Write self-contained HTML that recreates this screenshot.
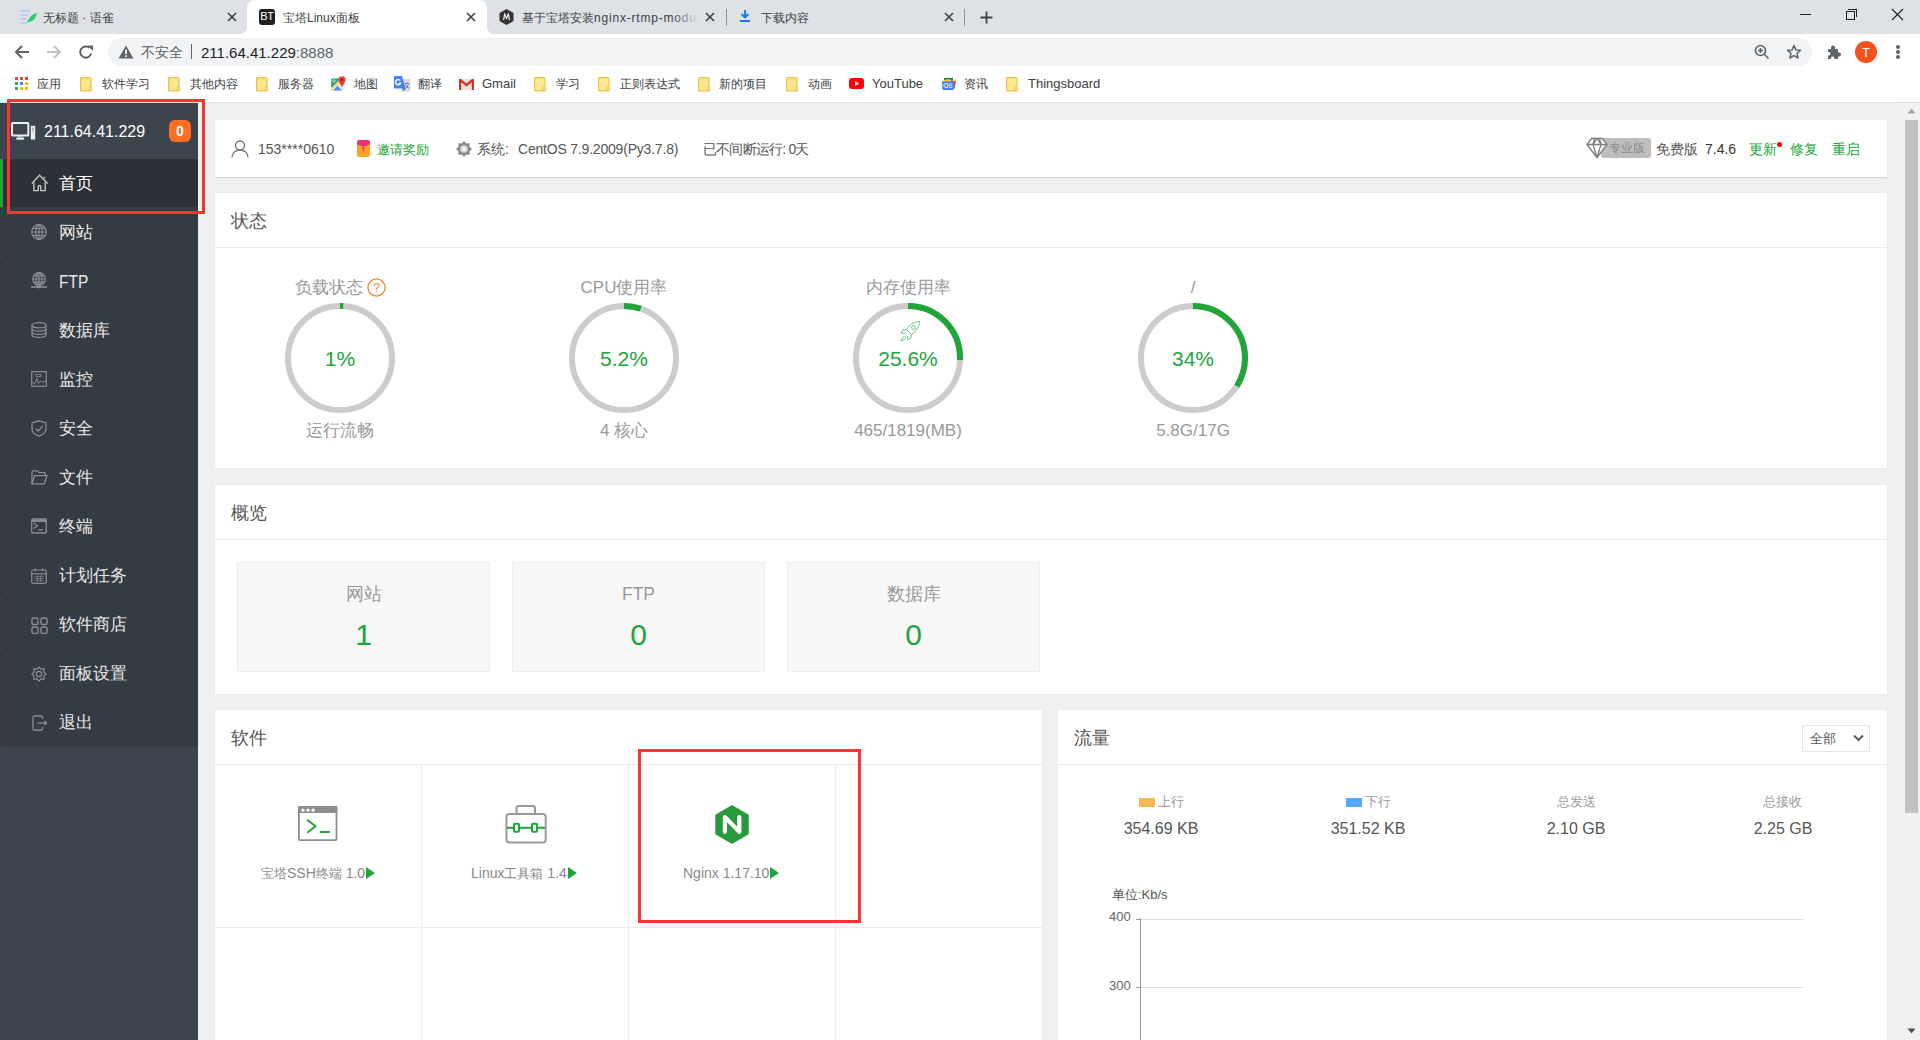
<!DOCTYPE html>
<html><head><meta charset="utf-8">
<style>
*{box-sizing:border-box;margin:0;padding:0}
html,body{width:1920px;height:1040px;overflow:hidden;background:#f0f0f0;font-family:"Liberation Sans",sans-serif;position:relative}
.a{position:absolute}
.t{position:absolute;white-space:nowrap;line-height:1}
/* chrome */
#tabstrip{left:0;top:0;width:1920px;height:34px;background:#dee1e6}
#acttab{left:247px;top:0;width:240px;height:35px;background:#fff;border-radius:8px 8px 0 0}
#toolbar{left:0;top:34px;width:1920px;height:35px;background:#fff}
#omni{left:108px;top:38px;width:1704px;height:28px;background:#f1f3f4;border-radius:14px}
#bmbar{left:0;top:69px;width:1920px;height:33px;background:#fff}
#bmline{left:0;top:102px;width:1920px;height:1px;background:#dadce0}
.tabtxt{font-size:12px;color:#3c4043}
.bm{font-size:12px;color:#3c4043}
.folder{position:absolute;width:12px;height:13px;background:#fde293;border:1px solid #f1c54a;border-radius:1px}
/* page */
#sidebar{left:0;top:103px;width:198px;height:937px;background:#3c444d}
#menu{left:0;top:159px;width:198px;height:588px;background:#353b42}
#cur{left:0;top:159px;width:198px;height:48px;background:#2c3138}
#curbar{left:0;top:159px;width:3px;height:48px;background:#20a53a}
.mi{font-size:17.3px;color:#e8e8e8}
.card{position:absolute;background:#fff;box-shadow:0 0 1px rgba(0,0,0,.12)}
.hdl{position:absolute;height:1px;background:#ebebeb}
.ttl{font-size:18px;color:#555}
#sbtrack{left:1903px;top:103px;width:17px;height:937px;background:#f1f1f1}
#sbthumb{left:1905px;top:120px;width:13px;height:693px;background:#c1c1c1}
.redbox{position:absolute;border:3px solid #fb3333}
.green{color:#20a53a}
.st{font-size:17px;color:#999}
.pct{font-size:21px;color:#20a53a}
.ovb{position:absolute;top:562px;width:253px;height:110px;background:#f8f8f8;border:1px solid #eee}
.ovl{top:586px;text-align:center;font-size:17.5px;color:#999}
.ovn{top:620px;text-align:center;font-size:30px;color:#20a53a}
.sw{font-size:14px;color:#888}
.cj{font-size:13px}
.tri{display:inline-block;width:0;height:0;border-left:9px solid #20a53a;border-top:6px solid transparent;border-bottom:6px solid transparent;margin-left:1px;vertical-align:-1px}
.lg{font-size:13px;color:#999}
.tv{top:821px;text-align:center;font-size:16px;color:#555}
.ax{font-size:13px;color:#666}
</style></head>
<body>
<!-- ============ CHROME ============ -->
<div id="tabstrip" class="a"></div>
<div id="acttab" class="a"></div>
<div id="toolbar" class="a"></div>
<div id="omni" class="a"></div>
<div id="bmbar" class="a"></div>
<div id="bmline" class="a"></div>
<!-- tabs -->
<svg class="a" style="left:20px;top:9px" width="18" height="17" viewBox="0 0 18 17"><g stroke="#a9cdef" stroke-width="1.6"><line x1="1" y1="2" x2="10" y2="2"/><line x1="1" y1="6" x2="8" y2="6"/><line x1="1" y1="10" x2="6" y2="10"/><line x1="1" y1="14" x2="5" y2="14"/></g><path d="M6 16 C8 9 12 5 17 4 C16 10 12 13 8 13 Z" fill="#2ecc71"/></svg>
<div class="t tabtxt" style="left:43px;top:12px">无标题 · 语雀</div>
<svg class="a" style="left:227px;top:12px" width="10" height="10" viewBox="0 0 10 10"><path d="M1 1L9 9M9 1L1 9" stroke="#3c4043" stroke-width="1.6"/></svg>
<!-- active tab flares -->
<div class="a" style="left:239px;top:26px;width:8px;height:8px;background:radial-gradient(circle at 0 0,#dee1e6 8px,#fff 8.5px)"></div>
<div class="a" style="left:487px;top:26px;width:8px;height:8px;background:radial-gradient(circle at 100% 0,#dee1e6 8px,#fff 8.5px)"></div>
<div class="a" style="left:259px;top:9px;width:16px;height:16px;background:#1f1f1f;border-radius:3px"></div>
<div class="t" style="left:260px;top:11px;width:14px;text-align:center;font-size:11px;color:#fff;letter-spacing:-0.3px">BT</div>
<div class="t tabtxt" style="left:283px;top:12px">宝塔Linux面板</div>
<svg class="a" style="left:466px;top:12px" width="10" height="10" viewBox="0 0 10 10"><path d="M1 1L9 9M9 1L1 9" stroke="#3c4043" stroke-width="1.6"/></svg>
<svg class="a" style="left:499px;top:9px" width="15" height="16" viewBox="0 0 15 16"><path d="M7.5 0L14.5 4V12L7.5 16L0.5 12V4Z" fill="#333"/><path d="M4.6 11.2L5.6 4.8L7.5 9.6L9.4 4.8L10.4 11.2" stroke="#fff" stroke-width="1.1" fill="none" stroke-linejoin="round"/></svg>
<div class="a" style="left:522px;top:9px;width:178px;height:17px;overflow:hidden"><div class="t tabtxt" style="left:0;top:3px">基于宝塔安装<span style="letter-spacing:.8px">nginx-rtmp-module</span></div></div>
<div class="a" style="left:672px;top:9px;width:28px;height:17px;background:linear-gradient(90deg,rgba(222,225,230,0),#dee1e6)"></div>
<svg class="a" style="left:705px;top:12px" width="10" height="10" viewBox="0 0 10 10"><path d="M1 1L9 9M9 1L1 9" stroke="#3c4043" stroke-width="1.6"/></svg>
<div class="a" style="left:726px;top:9px;width:1px;height:17px;background:#8f9296"></div>
<svg class="a" style="left:739px;top:9px" width="12" height="14" viewBox="0 0 12 14"><path d="M6 1V8M2.5 5L6 8.5L9.5 5" stroke="#1a73e8" stroke-width="1.8" fill="none"/><rect x="1" y="11" width="10" height="2" fill="#1a73e8"/></svg>
<div class="t tabtxt" style="left:761px;top:12px">下载内容</div>
<svg class="a" style="left:944px;top:12px" width="10" height="10" viewBox="0 0 10 10"><path d="M1 1L9 9M9 1L1 9" stroke="#3c4043" stroke-width="1.6"/></svg>
<div class="a" style="left:964px;top:9px;width:1px;height:17px;background:#8f9296"></div>
<svg class="a" style="left:980px;top:11px" width="13" height="13" viewBox="0 0 13 13"><path d="M6.5 0.5V12.5M0.5 6.5H12.5" stroke="#3c4043" stroke-width="1.8"/></svg>
<!-- window controls -->
<div class="a" style="left:1800px;top:14px;width:11px;height:1px;background:#202124"></div>
<div class="a" style="left:1848px;top:9px;width:9px;height:8px;border:1px solid #202124;border-bottom:none;border-left:none"></div>
<div class="a" style="left:1846px;top:11px;width:9px;height:9px;border:1px solid #202124;background:#dee1e6"></div>
<svg class="a" style="left:1891px;top:8px" width="13" height="13" viewBox="0 0 13 13"><path d="M1 1L12 12M12 1L1 12" stroke="#202124" stroke-width="1.1"/></svg>
<!-- toolbar -->
<svg class="a" style="left:14px;top:44px" width="16" height="16" viewBox="0 0 16 16"><path d="M15 8H2.5M8 2L2 8L8 14" stroke="#5f6368" stroke-width="2" fill="none"/></svg>
<svg class="a" style="left:46px;top:44px" width="16" height="16" viewBox="0 0 16 16"><path d="M1 8H13.5M8 2L14 8L8 14" stroke="#bdc1c6" stroke-width="2" fill="none"/></svg>
<svg class="a" style="left:78px;top:44px" width="16" height="16" viewBox="0 0 16 16"><path d="M13.2 9.5A5.6 5.6 0 1 1 11.5 3.8" stroke="#5f6368" stroke-width="2" fill="none"/><path d="M9.5 1.5H15V7Z" fill="#5f6368"/></svg>
<svg class="a" style="left:118px;top:45px" width="16" height="14" viewBox="0 0 16 14"><path d="M8 0.5L15.5 13.5H0.5Z" fill="#5f6368"/><rect x="7.1" y="4.5" width="1.8" height="4.5" fill="#f1f3f4"/><rect x="7.1" y="10.2" width="1.8" height="1.8" fill="#f1f3f4"/></svg>
<div class="t" style="left:141px;top:45px;font-size:14px;color:#5f6368">不安全</div>
<div class="a" style="left:191px;top:44px;width:1px;height:15px;background:#5f6368"></div>
<div class="t" style="left:201px;top:45px;font-size:15px;color:#202124">211.64.41.229<span style="color:#5f6368">:8888</span></div>
<svg class="a" style="left:1754px;top:44px" width="16" height="16" viewBox="0 0 16 16"><circle cx="6.5" cy="6.5" r="5" stroke="#5f6368" stroke-width="1.6" fill="none"/><path d="M10.2 10.2L14.5 14.5M6.5 4V9M4 6.5H9" stroke="#5f6368" stroke-width="1.6"/></svg>
<svg class="a" style="left:1786px;top:44px" width="16" height="16" viewBox="0 0 16 16"><path d="M8 1.5L9.9 5.9L14.6 6.3L11 9.4L12.1 14L8 11.6L3.9 14L5 9.4L1.4 6.3L6.1 5.9Z" stroke="#5f6368" stroke-width="1.5" fill="none" stroke-linejoin="round"/></svg>
<svg class="a" style="left:1826px;top:44px" width="16" height="16" viewBox="0 0 16 16"><path d="M2 5H5V3.5A2 2 0 0 1 9 3.5V5H12V8.5H13A2 2 0 0 1 13 12.5H12V15H8.5V14A1.8 1.8 0 0 0 5 14V15H2V11.5H3A1.8 1.8 0 0 0 3 8H2Z" fill="#5f6368"/></svg>
<div class="a" style="left:1855px;top:41px;width:22px;height:22px;border-radius:50%;background:#f4511e"></div>
<div class="t" style="left:1855px;top:46px;width:22px;text-align:center;font-size:13px;color:#fff">T</div>
<div class="a" style="left:1896px;top:45px;width:4px;height:4px;border-radius:50%;background:#5f6368"></div>
<div class="a" style="left:1896px;top:50px;width:4px;height:4px;border-radius:50%;background:#5f6368"></div>
<div class="a" style="left:1896px;top:55px;width:4px;height:4px;border-radius:50%;background:#5f6368"></div>
<!-- bookmarks -->
<svg class="a" style="left:15px;top:77px" width="14" height="14" viewBox="0 0 14 14"><rect x="0" y="0" width="3" height="3" fill="#ea4335"/><rect x="5" y="0" width="3" height="3" fill="#ea4335"/><rect x="10" y="0" width="3" height="3" fill="#ea4335"/><rect x="0" y="5" width="3" height="3" fill="#34a853"/><rect x="5" y="5" width="3" height="3" fill="#4285f4"/><rect x="10" y="5" width="3" height="3" fill="#fbbc04"/><rect x="0" y="10" width="3" height="3" fill="#34a853"/><rect x="5" y="10" width="3" height="3" fill="#fbbc04"/><rect x="10" y="10" width="3" height="3" fill="#fbbc04"/></svg>
<div class="t bm" style="left:37px;top:78px">应用</div>
<svg class="a" style="left:80px;top:77px" width="13" height="15" viewBox="0 0 13 15"><rect x="0.6" y="0.6" width="10.3" height="13.2" rx="0.6" fill="#fde68f" stroke="#e8c547" stroke-width="1.2"/><rect x="9.3" y="9.3" width="2.5" height="4.5" rx="1.2" fill="#fde68f" stroke="#e8c547" stroke-width="1"/></svg>
<div class="t bm" style="left:102px;top:78px">软件学习</div>
<svg class="a" style="left:168px;top:77px" width="13" height="15" viewBox="0 0 13 15"><rect x="0.6" y="0.6" width="10.3" height="13.2" rx="0.6" fill="#fde68f" stroke="#e8c547" stroke-width="1.2"/><rect x="9.3" y="9.3" width="2.5" height="4.5" rx="1.2" fill="#fde68f" stroke="#e8c547" stroke-width="1"/></svg>
<div class="t bm" style="left:190px;top:78px">其他内容</div>
<svg class="a" style="left:256px;top:77px" width="13" height="15" viewBox="0 0 13 15"><rect x="0.6" y="0.6" width="10.3" height="13.2" rx="0.6" fill="#fde68f" stroke="#e8c547" stroke-width="1.2"/><rect x="9.3" y="9.3" width="2.5" height="4.5" rx="1.2" fill="#fde68f" stroke="#e8c547" stroke-width="1"/></svg>
<div class="t bm" style="left:278px;top:78px">服务器</div>
<svg class="a" style="left:331px;top:76px" width="16" height="15" viewBox="0 0 16 15"><rect x="0.3" y="2.5" width="12.5" height="12" rx="0.8" fill="#e8eaed"/><path d="M0.3 3.3A0.8 0.8 0 0 1 1.1 2.5H9.5L0.3 12Z" fill="#1ea362"/><path d="M2 14.5L6.5 9.8L11 14.5Z" fill="#4a89f3"/><path d="M0.5 13.8L9.8 3.5" stroke="#ffd04b" stroke-width="1.4"/><path d="M11 0.3A3.6 3.6 0 0 1 14.6 3.9C14.6 6.5 11.8 8.5 11 11.3C10.2 8.5 7.4 6.5 7.4 3.9A3.6 3.6 0 0 1 11 0.3Z" fill="#e94235"/><circle cx="11" cy="3.9" r="1.1" fill="#7a1a12"/><circle cx="3" cy="5" r="1.3" fill="none" stroke="#c8f0d8" stroke-width=".8"/></svg>
<div class="t bm" style="left:354px;top:78px">地图</div>
<svg class="a" style="left:394px;top:76px" width="17" height="16" viewBox="0 0 17 16"><rect x="7.5" y="3" width="9" height="12.7" fill="#dadce0"/><path d="M1 0H9.8L14.2 15.3H1A1 1 0 0 1 0 14.3V1A1 1 0 0 1 1 0Z" fill="#4285f4" transform="scale(0.82 0.82)"/><path d="M8.3 12.5L11.5 12.5L9.5 15Z" fill="#3b4bb0"/><path d="M6.2 4.5A2.6 2.6 0 1 0 6.6 7.2H4.6" stroke="#fff" stroke-width="1.3" fill="none"/><path d="M11 7.5H15M13 6.5V7.5M11.8 8.5C12.3 10.5 13.5 11.8 15 12.3M14.2 8.5C13.7 10.5 12.5 11.8 11 12.3" stroke="#5f6368" stroke-width=".8" fill="none"/></svg>
<div class="t bm" style="left:418px;top:78px">翻译</div>
<svg class="a" style="left:459px;top:78px" width="15" height="13" viewBox="0 0 15 13"><rect x="1.5" y="1" width="12" height="11" fill="#e6e6e6"/><path d="M0 1V12H2.2V4.3L7.5 8.6L12.8 4.3V12H15V1H13L7.5 5.6L2 1Z" fill="#d93025"/></svg>
<div class="t" style="left:482px;top:77px;font-size:13px;color:#3c4043">Gmail</div>
<svg class="a" style="left:534px;top:77px" width="13" height="15" viewBox="0 0 13 15"><rect x="0.6" y="0.6" width="10.3" height="13.2" rx="0.6" fill="#fde68f" stroke="#e8c547" stroke-width="1.2"/><rect x="9.3" y="9.3" width="2.5" height="4.5" rx="1.2" fill="#fde68f" stroke="#e8c547" stroke-width="1"/></svg>
<div class="t bm" style="left:556px;top:78px">学习</div>
<svg class="a" style="left:598px;top:77px" width="13" height="15" viewBox="0 0 13 15"><rect x="0.6" y="0.6" width="10.3" height="13.2" rx="0.6" fill="#fde68f" stroke="#e8c547" stroke-width="1.2"/><rect x="9.3" y="9.3" width="2.5" height="4.5" rx="1.2" fill="#fde68f" stroke="#e8c547" stroke-width="1"/></svg>
<div class="t bm" style="left:620px;top:78px">正则表达式</div>
<svg class="a" style="left:698px;top:77px" width="13" height="15" viewBox="0 0 13 15"><rect x="0.6" y="0.6" width="10.3" height="13.2" rx="0.6" fill="#fde68f" stroke="#e8c547" stroke-width="1.2"/><rect x="9.3" y="9.3" width="2.5" height="4.5" rx="1.2" fill="#fde68f" stroke="#e8c547" stroke-width="1"/></svg>
<div class="t bm" style="left:719px;top:78px">新的项目</div>
<svg class="a" style="left:786px;top:77px" width="13" height="15" viewBox="0 0 13 15"><rect x="0.6" y="0.6" width="10.3" height="13.2" rx="0.6" fill="#fde68f" stroke="#e8c547" stroke-width="1.2"/><rect x="9.3" y="9.3" width="2.5" height="4.5" rx="1.2" fill="#fde68f" stroke="#e8c547" stroke-width="1"/></svg>
<div class="t bm" style="left:808px;top:78px">动画</div>
<svg class="a" style="left:849px;top:78px" width="15" height="11" viewBox="0 0 15 11"><rect x="0" y="0" width="15" height="11" rx="3" fill="#ff0000"/><path d="M6 3V8L10 5.5Z" fill="#fff"/></svg>
<div class="t" style="left:872px;top:77px;font-size:13px;color:#3c4043">YouTube</div>
<svg class="a" style="left:940px;top:77px" width="17" height="14" viewBox="0 0 17 14"><rect x="4" y="0.8" width="9" height="3" fill="#0f9d58"/><path d="M1.3 4.5L5 3L8.5 2.3L13.5 3.5L16 4.5L14.5 12H2.5Z" fill="#ffcd40"/><path d="M11 3L16 4.5L14.5 11H12Z" fill="#ea4335"/><rect x="2.3" y="4.2" width="11.6" height="8.8" rx=".8" fill="#4285f4"/><circle cx="6" cy="8.5" r="2" fill="none" stroke="#d6e4fd" stroke-width="1.2"/><path d="M9 6.8H12.3M9 8.6H12.3M9 10.4H12.3" stroke="#d6e4fd" stroke-width="1"/></svg>
<div class="t bm" style="left:964px;top:78px">资讯</div>
<svg class="a" style="left:1006px;top:77px" width="13" height="15" viewBox="0 0 13 15"><rect x="0.6" y="0.6" width="10.3" height="13.2" rx="0.6" fill="#fde68f" stroke="#e8c547" stroke-width="1.2"/><rect x="9.3" y="9.3" width="2.5" height="4.5" rx="1.2" fill="#fde68f" stroke="#e8c547" stroke-width="1"/></svg>
<div class="t" style="left:1028px;top:77px;font-size:13px;color:#3c4043">Thingsboard</div>

<!-- ============ PAGE ============ -->
<div id="sidebar" class="a"></div>
<div id="menu" class="a"></div>
<div id="cur" class="a"></div>
<div id="curbar" class="a"></div>
<!-- sidebar content -->
<div class="a" style="left:0;top:207px;width:2px;height:540px;background:repeating-linear-gradient(180deg,#4a4a4a 0,#4a4a4a 1px,#3a3a3a 1px,#3a3a3a 49px)"></div>
<svg class="a" style="left:11px;top:122px" width="25" height="19" viewBox="0 0 25 19"><rect x="1" y="1" width="16.3" height="12.5" rx=".5" stroke="#f0f0f0" stroke-width="2" fill="none"/><rect x="7" y="14" width="4.5" height="1.5" fill="#b8bbbe"/><rect x="5.2" y="15.6" width="8" height="2.2" rx="1" fill="#e8e8e8"/><rect x="19.8" y="3.8" width="4.4" height="13.8" rx=".6" fill="#f0f0f0"/><rect x="21.2" y="5.5" width="1.6" height="3" fill="#9ea1a5"/><rect x="21.2" y="9.5" width="1.6" height="1.5" fill="#c5c7ca"/></svg>
<div class="t" style="left:44px;top:124px;font-size:16px;color:#fff">211.64.41.229</div>
<div class="a" style="left:169px;top:120px;width:22px;height:22px;border-radius:6px;background:#fd6e23"></div>
<div class="t" style="left:169px;top:124px;width:22px;text-align:center;font-size:14px;font-weight:bold;color:#fff">0</div>

<svg class="a" style="left:31px;top:174px" width="18" height="18" viewBox="0 0 18 18" fill="none" stroke="#c4c6c9" stroke-width="1.4"><path d="M0.8 9.6L8.5 1.3L16.6 9.6"/><path d="M2.9 8.2V16.6H7.2V12.8A1.3 1.3 0 0 1 9.8 12.8V16.6H14.2V8.2"/><circle cx="13.4" cy="3.7" r="1.3" fill="#8b8e92" stroke="none"/></svg>
<div class="t mi" style="left:59px;top:175px;color:#fff">首页</div>

<svg class="a" style="left:31px;top:224px" width="16" height="16" viewBox="0 0 16 16" fill="none" stroke="#8a8e93" stroke-width="1.2"><circle cx="8" cy="8" r="7.3"/><ellipse cx="8" cy="8" rx="3.3" ry="7.3"/><path d="M8 0.7V15.3M0.7 8H15.3M2 4.3H14M2 11.7H14"/></svg>
<div class="t mi" style="left:59px;top:224px">网站</div>

<svg class="a" style="left:30px;top:272px" width="18" height="17" viewBox="0 0 18 17" fill="none" stroke="#8a8e93" stroke-width="1.2"><circle cx="9" cy="7" r="6.3"/><ellipse cx="9" cy="7" rx="2.8" ry="6.3"/><path d="M9 0.7V13.3M2.7 7H15.3M3.8 3.8H14.2M3.8 10.2H14.2"/><path d="M1 15H17" stroke-width="1.6"/><rect x="7.3" y="13.8" width="3.4" height="2.4" fill="#8a8e93" stroke="none"/></svg>
<div class="t mi" style="left:59px;top:273px;font-size:18px;transform:scaleX(.86);transform-origin:0 0">FTP</div>

<svg class="a" style="left:31px;top:322px" width="16" height="16" viewBox="0 0 16 16" fill="none" stroke="#8a8e93" stroke-width="1.2"><ellipse cx="8" cy="3.3" rx="7" ry="2.6"/><path d="M1 3.3V12.7C1 14.2 4.1 15.3 8 15.3C11.9 15.3 15 14.2 15 12.7V3.3"/><path d="M1 6.5C1 8 4.1 9.1 8 9.1C11.9 9.1 15 8 15 6.5M1 9.7C1 11.2 4.1 12.3 8 12.3C11.9 12.3 15 11.2 15 9.7"/></svg>
<div class="t mi" style="left:59px;top:322px">数据库</div>

<svg class="a" style="left:31px;top:371px" width="16" height="16" viewBox="0 0 16 16" fill="none" stroke="#8a8e93" stroke-width="1.2"><rect x="0.7" y="0.7" width="14.6" height="14.6"/><rect x="5" y="3.5" width="5" height="2" stroke-width=".8"/><path d="M1 11L3.5 13L6 7.5L7.5 12.5L9.5 10L12 11.5L15 9.5" stroke-width="1"/></svg>
<div class="t mi" style="left:59px;top:371px">监控</div>

<svg class="a" style="left:31px;top:420px" width="16" height="17" viewBox="0 0 16 17" fill="none" stroke="#8a8e93" stroke-width="1.3"><path d="M8 0.8L15 3V8.5C15 12 12 14.8 8 16.2C4 14.8 1 12 1 8.5V3Z"/><path d="M4.5 8.5L7.2 11L11.8 6"/></svg>
<div class="t mi" style="left:59px;top:420px">安全</div>

<svg class="a" style="left:31px;top:470px" width="17" height="15" viewBox="0 0 17 15" fill="none" stroke="#8a8e93" stroke-width="1.3"><path d="M1 13.8V2A1.3 1.3 0 0 1 2.3 0.8H6.5L8 2.7H13.3A1 1 0 0 1 14.3 3.7V5.7"/><path d="M1 13.8L3.5 5.7H16L13.3 13.8Z"/></svg>
<div class="t mi" style="left:59px;top:469px">文件</div>

<svg class="a" style="left:31px;top:518px" width="16" height="16" viewBox="0 0 16 16" fill="none" stroke="#8a8e93" stroke-width="1.3"><rect x="0.7" y="1" width="14.6" height="14" rx="1"/><path d="M1 2.8H15" stroke-width="2.4"/><path d="M2.5 5.3L6.5 7.8L2.5 10.5"/><path d="M7.5 11.8H12"/></svg>
<div class="t mi" style="left:59px;top:518px">终端</div>

<svg class="a" style="left:31px;top:568px" width="16" height="16" viewBox="0 0 16 16" fill="none" stroke="#8a8e93" stroke-width="1.2"><rect x="0.7" y="2" width="14.6" height="13.3" rx="1.5"/><path d="M0.7 5.7H15.3"/><path d="M4.3 0.5V3M11.7 0.5V3" stroke-width="1.5"/><path d="M3.5 8.3H12.5M3.5 10.5H12.5M3.5 12.7H12.5M6.3 7.5V14M9.7 7.5V14" stroke-width=".7"/></svg>
<div class="t mi" style="left:59px;top:567px">计划任务</div>

<svg class="a" style="left:31px;top:617px" width="17" height="17" viewBox="0 0 17 17" fill="none" stroke="#8a8e93" stroke-width="1.4"><rect x="1" y="1" width="6" height="6.5" rx="1.6"/><rect x="10" y="1" width="6" height="6.5" rx="1.6"/><rect x="1" y="10" width="6" height="6.5" rx="1.6"/><rect x="10" y="10" width="6" height="6.5" rx="1.6"/></svg>
<div class="t mi" style="left:59px;top:616px">软件商店</div>

<svg class="a" style="left:31px;top:666px" width="16" height="16" viewBox="0 0 16 16" fill="none" stroke="#8a8e93" stroke-width="1.2"><path d="M8 0.8L10 3.2L13.1 2.9L12.8 6L15.2 8L12.8 10L13.1 13.1L10 12.8L8 15.2L6 12.8L2.9 13.1L3.2 10L0.8 8L3.2 6L2.9 2.9L6 3.2Z"/><circle cx="8" cy="8" r="2.7"/></svg>
<div class="t mi" style="left:59px;top:665px">面板设置</div>

<svg class="a" style="left:32px;top:715px" width="16" height="16" viewBox="0 0 16 16" fill="none" stroke="#8a8e93" stroke-width="1.3"><path d="M10.5 4V2.2A1.2 1.2 0 0 0 9.3 1H2.3A1.2 1.2 0 0 0 1 2.2V13.8A1.2 1.2 0 0 0 2.3 15H9.3A1.2 1.2 0 0 0 10.5 13.8V12"/><path d="M5.5 8H13.5"/><path d="M12.5 6L14.5 8L12.5 10" fill="#8a8e93"/></svg>
<div class="t mi" style="left:59px;top:714px">退出</div>

<div id="sbtrack" class="a"></div>
<div id="sbthumb" class="a"></div>

<div class="card" style="left:215px;top:120px;width:1672px;height:57px;box-shadow:0 1px 1px rgba(0,0,0,.09),0 0 1px rgba(0,0,0,.08)"></div>
<div class="card" style="left:215px;top:193px;width:1672px;height:275px"></div>
<div class="hdl" style="left:215px;top:247px;width:1672px"></div>
<div class="card" style="left:215px;top:485px;width:1672px;height:209px"></div>
<div class="hdl" style="left:215px;top:539px;width:1672px"></div>
<div class="card" style="left:215px;top:710px;width:827px;height:330px"></div>
<div class="hdl" style="left:215px;top:764px;width:827px"></div>
<div class="card" style="left:1058px;top:710px;width:829px;height:330px"></div>
<div class="hdl" style="left:1058px;top:764px;width:829px"></div>

<!--CONTENT-->
<!-- card1 user info -->
<svg class="a" style="left:231px;top:140px" width="18" height="18" viewBox="0 0 18 18" fill="none" stroke="#777" stroke-width="1.4"><circle cx="9" cy="5.5" r="4.5"/><path d="M1 17.5C1 12.8 4.6 10 9 10C13.4 10 17 12.8 17 17.5"/></svg>
<div class="t" style="left:258px;top:142px;font-size:14px;color:#555">153****0610</div>
<svg class="a" style="left:357px;top:140px" width="13" height="17" viewBox="0 0 13 17"><rect x="0" y="0" width="13" height="17" rx="2.5" fill="#f6a623"/><path d="M0 2.5A2.5 2.5 0 0 1 2.5 0H10.5A2.5 2.5 0 0 1 13 2.5V4.2Q6.5 8.2 0 4.2Z" fill="#e8336e"/><path d="M5.2 6.6H7.8L6.5 12.5Z" fill="#e8336e"/></svg>
<div class="t green" style="left:377px;top:143px;font-size:13px">邀请奖励</div>
<svg class="a" style="left:456px;top:141px" width="16" height="16" viewBox="0 0 15.2 15.2"><path d="M7.60 0.00 L9.74 2.43 L12.97 2.23 L12.77 5.46 L15.20 7.60 L12.77 9.74 L12.97 12.97 L9.74 12.77 L7.60 15.20 L5.46 12.77 L2.23 12.97 L2.43 9.74 L0.00 7.60 L2.43 5.46 L2.23 2.23 L5.46 2.43Z" fill="#888"/><circle cx="7.6" cy="7.6" r="3.6" fill="#d8d8d8"/><circle cx="7.6" cy="7.6" r="1.8" fill="#f4f4f4"/></svg>
<div class="t" style="left:477px;top:142px;font-size:14px;color:#555">系统:</div>
<div class="t" style="left:518px;top:142px;font-size:14px;color:#555;letter-spacing:-0.2px">CentOS 7.9.2009(Py3.7.8)</div>
<div class="t" style="left:703px;top:142px;font-size:14px;color:#555;letter-spacing:-0.8px">已不间断运行: 0天</div>

<div class="a" style="left:1601px;top:138px;width:50px;height:20px;background:#bdbdbd;border-radius:3px"></div>
<svg class="a" style="left:1586px;top:137px" width="22" height="22" viewBox="0 0 22 22" fill="#fff" stroke="#7d7d7d" stroke-width="1.3" stroke-linejoin="round"><path d="M5.5 1.5H16.5L21 7.5L11 20.5L1 7.5Z"/><path d="M1 7.5H21M8.5 1.5L7 7.5L11 20.5L15 7.5L13.5 1.5M7 7.5L11 1.5L15 7.5" fill="none"/></svg>
<div class="t" style="left:1609px;top:142px;font-size:12px;color:#8a8a8a">专业版</div>
<div class="t" style="left:1656px;top:142px;font-size:14px;color:#555">免费版</div>
<div class="t" style="left:1705px;top:142px;font-size:14px;color:#333">7.4.6</div>
<div class="t green" style="left:1749px;top:142px;font-size:14px">更新</div>
<div class="a" style="left:1777px;top:142px;width:5px;height:5px;border-radius:50%;background:#f00"></div>
<div class="t green" style="left:1790px;top:142px;font-size:14px">修复</div>
<div class="t green" style="left:1832px;top:142px;font-size:14px">重启</div>

<!-- card2 status -->
<div class="t ttl" style="left:231px;top:212px">状态</div>
<div class="t st" style="left:295px;top:279px">负载状态</div>
<svg class="a" style="left:367px;top:278px" width="19" height="19" viewBox="0 0 19 19"><circle cx="9.5" cy="9.5" r="8.6" stroke="#f0852d" stroke-width="1.3" fill="none"/><text x="9.5" y="14" text-anchor="middle" font-size="12" fill="#f0852d" font-family="Liberation Sans">?</text></svg>
<svg class="a" style="left:285px;top:303px" width="110" height="110" viewBox="0 0 110 110"><circle cx="55" cy="55" r="52" stroke="#ccc" stroke-width="6" fill="none"/><circle cx="55" cy="55" r="52" stroke="#20a53a" stroke-width="6" fill="none" stroke-dasharray="3.27 400" transform="rotate(-90 55 55)"/></svg>
<div class="t pct" style="left:285px;top:348px;width:110px;text-align:center">1%</div>
<div class="t st" style="left:240px;top:422px;width:200px;text-align:center">运行流畅</div>

<div class="t st" style="left:524px;top:279px;width:200px;text-align:center">CPU使用率</div>
<svg class="a" style="left:569px;top:303px" width="110" height="110" viewBox="0 0 110 110"><circle cx="55" cy="55" r="52" stroke="#ccc" stroke-width="6" fill="none"/><circle cx="55" cy="55" r="52" stroke="#20a53a" stroke-width="6" fill="none" stroke-dasharray="16.99 400" transform="rotate(-90 55 55)"/></svg>
<div class="t pct" style="left:569px;top:348px;width:110px;text-align:center">5.2%</div>
<div class="t st" style="left:524px;top:422px;width:200px;text-align:center">4 核心</div>

<div class="t st" style="left:808px;top:279px;width:200px;text-align:center">内存使用率</div>
<svg class="a" style="left:853px;top:303px" width="110" height="110" viewBox="0 0 110 110"><circle cx="55" cy="55" r="52" stroke="#ccc" stroke-width="6" fill="none"/><circle cx="55" cy="55" r="52" stroke="#20a53a" stroke-width="6" fill="none" stroke-dasharray="83.6 400" transform="rotate(-90 55 55)"/></svg>
<svg class="a" style="left:899px;top:321px" width="22" height="21" viewBox="0 0 22 21" fill="none" stroke="#6cc77f" stroke-width="1"><path d="M20.5 0.5C15 0.8 10.5 3.5 7.5 8.5L12.5 13.5C17.5 10.5 20.2 6 20.5 0.5Z"/><circle cx="14.5" cy="6.5" r="2"/><path d="M7.5 8.5L4 9L2 12L6 12.5M12.5 13.5L12 17L9 19L8.5 15"/><path d="M6 15C4.5 15.5 3 17 2 20C5 19 6.5 17.5 7 16"/></svg>
<div class="t pct" style="left:853px;top:348px;width:110px;text-align:center">25.6%</div>
<div class="t st" style="left:808px;top:422px;width:200px;text-align:center">465/1819(MB)</div>

<div class="t st" style="left:1093px;top:279px;width:200px;text-align:center">/</div>
<svg class="a" style="left:1138px;top:303px" width="110" height="110" viewBox="0 0 110 110"><circle cx="55" cy="55" r="52" stroke="#ccc" stroke-width="6" fill="none"/><circle cx="55" cy="55" r="52" stroke="#20a53a" stroke-width="6" fill="none" stroke-dasharray="111.1 400" transform="rotate(-90 55 55)"/></svg>
<div class="t pct" style="left:1138px;top:348px;width:110px;text-align:center">34%</div>
<div class="t st" style="left:1093px;top:422px;width:200px;text-align:center">5.8G/17G</div>

<!-- card3 overview -->
<div class="t ttl" style="left:231px;top:504px">概览</div>
<div class="ovb" style="left:237px"></div>
<div class="ovb" style="left:512px"></div>
<div class="ovb" style="left:787px"></div>
<div class="t ovl" style="left:237px;width:253px">网站</div>
<div class="t ovn" style="left:237px;width:253px">1</div>
<div class="t ovl" style="left:512px;width:253px">FTP</div>
<div class="t ovn" style="left:512px;width:253px">0</div>
<div class="t ovl" style="left:787px;width:253px">数据库</div>
<div class="t ovn" style="left:787px;width:253px">0</div>

<!-- card4 software -->
<div class="t ttl" style="left:231px;top:729px">软件</div>
<div class="a" style="left:421px;top:765px;width:1px;height:275px;background:#ebebf5"></div>
<div class="a" style="left:628px;top:765px;width:1px;height:275px;background:#ebebf5"></div>
<div class="a" style="left:835px;top:765px;width:1px;height:275px;background:#ebebf5"></div>
<div class="a" style="left:215px;top:927px;width:827px;height:1px;background:#ebebf5"></div>
<svg class="a" style="left:298px;top:806px" width="40" height="36" viewBox="0 0 40 36"><rect x="0.9" y="0.9" width="37.6" height="33.2" rx="1" fill="none" stroke="#8e8e8e" stroke-width="1.8"/><rect x="0" y="0" width="39.4" height="7" rx="1" fill="#8e8e8e"/><circle cx="5" cy="4.2" r="1.6" fill="#fff"/><circle cx="10" cy="4.2" r="1.6" fill="#fff"/><circle cx="15.1" cy="4.2" r="1.6" fill="#fff"/><path d="M9.8 14.2L17.6 20.3L9.8 26.2" stroke="#20a53a" stroke-width="2" fill="none" stroke-linecap="round" stroke-linejoin="round"/><path d="M22.5 25.9H31" stroke="#20a53a" stroke-width="2" stroke-linecap="round"/></svg>
<div class="t sw" style="left:261px;top:866px"><span class="cj">宝塔</span>SSH<span class="cj">终端</span> 1.0<span class="tri"></span></div>
<svg class="a" style="left:505px;top:805px" width="42" height="39" viewBox="0 0 42 39"><rect x="1.5" y="9" width="39.2" height="28.6" rx="3" fill="none" stroke="#999" stroke-width="2"/><path d="M11.5 9V3.2A2.2 2.2 0 0 1 13.7 1H27.8A2.2 2.2 0 0 1 30 3.2V9" fill="none" stroke="#999" stroke-width="2"/><path d="M2 22.8H40" stroke="#20a53a" stroke-width="2"/><rect x="9" y="18.8" width="5" height="8" rx="1" fill="#fff" stroke="#20a53a" stroke-width="2"/><rect x="27" y="18.8" width="5" height="8" rx="1" fill="#fff" stroke="#20a53a" stroke-width="2"/></svg>
<div class="t sw" style="left:471px;top:866px">Linux<span class="cj">工具箱</span> 1.4<span class="tri"></span></div>
<svg class="a" style="left:715px;top:805px" width="34" height="39" viewBox="0 0 34 39"><path d="M17 0L33.7 9.8V29.2L17 39L0.3 29.2V9.8Z" fill="#279a3c"/><path d="M9.9 26.8V12L24.3 26.8V12" stroke="#fff" stroke-width="4.2" fill="none" stroke-linecap="round" stroke-linejoin="round"/></svg>
<div class="t sw" style="left:683px;top:866px">Nginx 1.17.10<span class="tri"></span></div>

<!-- card5 traffic -->
<div class="t ttl" style="left:1074px;top:729px">流量</div>
<div class="a" style="left:1802px;top:725px;width:68px;height:27px;border:1px solid #e6e6e6;background:#fff"></div>
<div class="t" style="left:1810px;top:732px;font-size:13px;color:#555">全部</div>
<svg class="a" style="left:1853px;top:734px" width="11" height="8" viewBox="0 0 11 8"><path d="M1 1.5L5.5 6L10 1.5" stroke="#5a5a5a" stroke-width="2" fill="none"/></svg>
<div class="a" style="left:1139px;top:798px;width:16px;height:9px;background:#f7b851"></div>
<div class="t lg" style="left:1158px;top:795px">上行</div>
<div class="a" style="left:1346px;top:798px;width:16px;height:9px;background:#52a9ff"></div>
<div class="t lg" style="left:1365px;top:795px">下行</div>
<div class="t lg" style="left:1476px;top:795px;width:200px;text-align:center">总发送</div>
<div class="t lg" style="left:1682px;top:795px;width:200px;text-align:center">总接收</div>
<div class="t tv" style="left:1061px;width:200px">354.69 KB</div>
<div class="t tv" style="left:1268px;width:200px">351.52 KB</div>
<div class="t tv" style="left:1476px;width:200px">2.10 GB</div>
<div class="t tv" style="left:1683px;width:200px">2.25 GB</div>
<div class="t" style="left:1112px;top:888px;font-size:13px;color:#555">单位:Kb/s</div>
<div class="t ax" style="left:1109px;top:910px">400</div>
<div class="t ax" style="left:1109px;top:979px">300</div>
<div class="a" style="left:1141px;top:919px;width:662px;height:1px;background:#e0e0e0"></div>
<div class="a" style="left:1141px;top:987px;width:662px;height:1px;background:#e0e0e0"></div>
<div class="a" style="left:1136px;top:919px;width:5px;height:1px;background:#999"></div>
<div class="a" style="left:1136px;top:987px;width:5px;height:1px;background:#999"></div>
<div class="a" style="left:1140px;top:918px;width:1px;height:122px;background:#999"></div>
<!-- scrollbar arrows -->
<svg class="a" style="left:1907px;top:108px" width="9" height="6" viewBox="0 0 9 6"><path d="M0.5 5.5L4.5 0.5L8.5 5.5Z" fill="#a3a3a3"/></svg>
<svg class="a" style="left:1907px;top:1028px" width="9" height="6" viewBox="0 0 9 6"><path d="M0.5 0.5L4.5 5.5L8.5 0.5Z" fill="#505050"/></svg>

<div class="redbox" style="left:7px;top:99px;width:198px;height:115px"></div>
<div class="redbox" style="left:638px;top:749px;width:223px;height:174px"></div>
</body></html>
